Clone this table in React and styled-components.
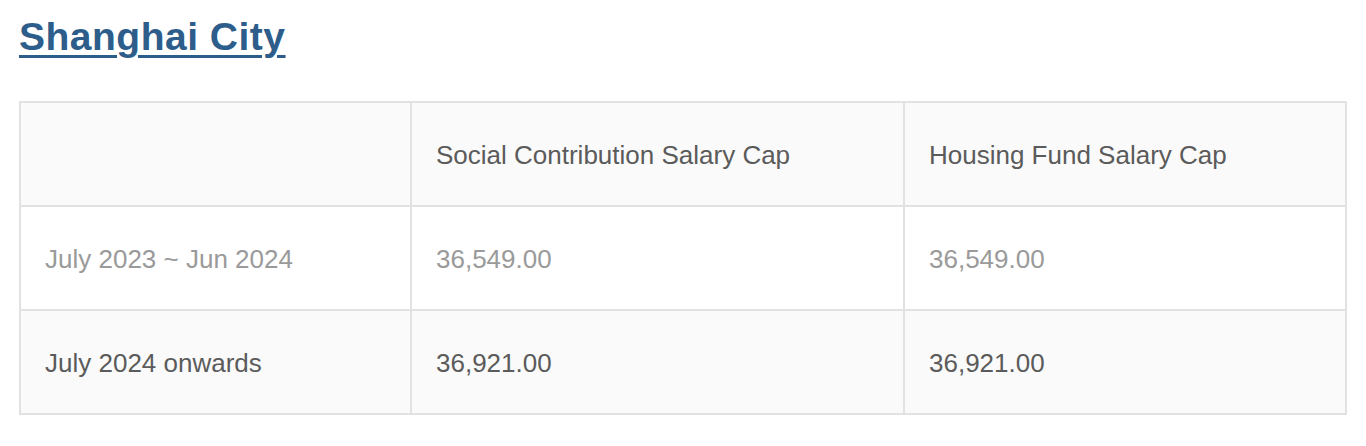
import React from 'react'
import styled, { createGlobalStyle } from 'styled-components'

const GlobalStyle = createGlobalStyle`
    body {
        margin: 0;
        background: #fff;
        font-family: "Liberation Sans", Arial, sans-serif;
    }
`

const Page = styled.div`
    padding: 15px 19px 0 19px;
`

const Heading = styled.a`
    display: inline-block;
    font-size: 39px;
    font-weight: 700;
    letter-spacing: 0.5px;
    color: #2d5d8a;
    text-decoration: underline;
    text-underline-offset: 5px;
    text-decoration-thickness: 3px;
    margin-bottom: 42px;
    cursor: pointer;
`

const Table = styled.table`
    width: 1326px;
    border-collapse: collapse;
    table-layout: fixed;
`

const Row = styled.tr`
    height: 104px;
    background: ${p => (p.$shaded ? '#fafafa' : '#fff')};
`

const Cell = styled.td`
    border: 2px solid #e2e2e2;
    padding: 3px 24px 0 24px;
    font-size: 26px;
    color: ${p => (p.$muted ? '#9a9a9a' : '#5b5b5b')};
    vertical-align: middle;
    white-space: nowrap;
`

const rows = [
    { period: 'July 2023 ~ Jun 2024', social: '36,549.00', housing: '36,549.00', muted: true },
    { period: 'July 2024 onwards', social: '36,921.00', housing: '36,921.00', muted: false },
]

export default function App() {
    return (
        <Page>
            <GlobalStyle />
            <Heading>Shanghai City</Heading>
            <Table>
                <colgroup>
                    <col style={{ width: 391 }} />
                    <col style={{ width: 493 }} />
                    <col style={{ width: 442 }} />
                </colgroup>
                <tbody>
                    <Row $shaded>
                        <Cell></Cell>
                        <Cell>Social Contribution Salary Cap</Cell>
                        <Cell>Housing Fund Salary Cap</Cell>
                    </Row>
                    {rows.map((r, i) => (
                        <Row key={r.period} $shaded={i % 2 === 1}>
                            <Cell $muted={r.muted}>{r.period}</Cell>
                            <Cell $muted={r.muted}>{r.social}</Cell>
                            <Cell $muted={r.muted}>{r.housing}</Cell>
                        </Row>
                    ))}
                </tbody>
            </Table>
        </Page>
    )
}
